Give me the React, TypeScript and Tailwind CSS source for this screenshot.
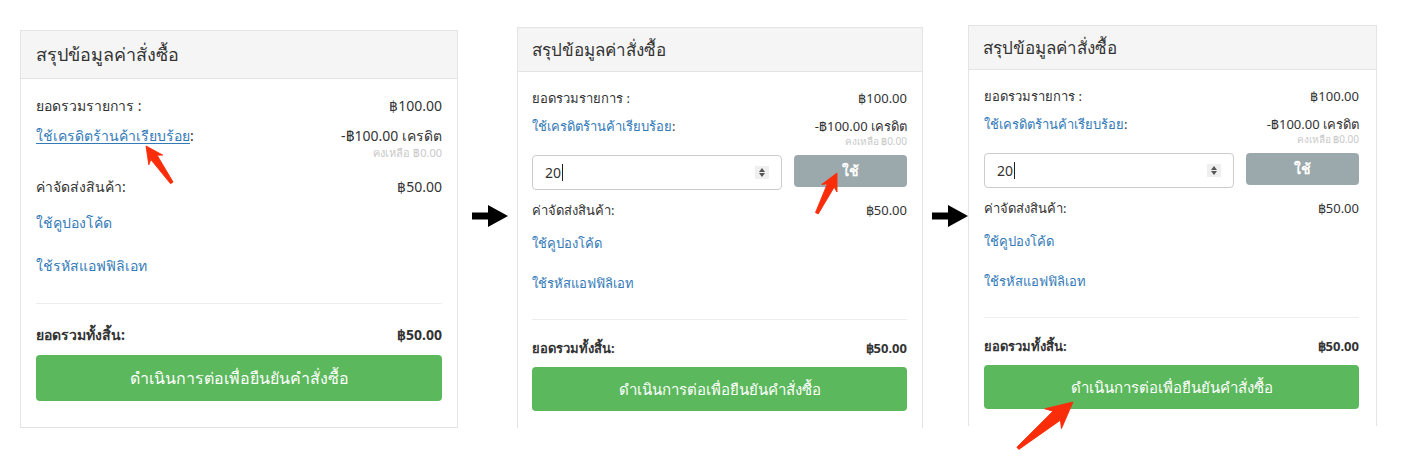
const blue = "text-[#337ab7]";

function BlackArrow() {
  return (
    <svg width="36" height="22" viewBox="0 0 36 22">
      <rect x="0" y="7.5" width="18" height="7" fill="#000" />
      <polygon points="16,0 36,11 16,22" fill="#000" />
    </svg>
  );
}

function RedArrow({ x, y, angle, len, head }: { x: number; y: number; angle: number; len: number; head: number }) {
  const w = head * 0.5;
  const pts = [
    [0, 0],
    [-w, head],
    [-w * 0.45, head * 0.82],
    [-1.5, len],
    [1.5, len],
    [w * 0.45, head * 0.82],
    [w, head],
  ]
    .map((p) => p.join(","))
    .join(" ");
  return (
    <g transform={`translate(${x} ${y}) rotate(${angle})`}>
      <polygon points={pts} fill="#fa2d0a" strokeLinejoin="round" stroke="#fa2d0a" strokeWidth="0.8" />
    </g>
  );
}

function FirstPanel() {
  return (
    <div className="mt-[30px] w-[438px] shrink-0 border border-[#e4e4e4] bg-white">
      <div className="flex h-[48px] items-center border-b border-[#e4e4e4] bg-[#f5f5f5] px-[15px] text-[18px] text-[#333]">
        สรุปข้อมูลค่าสั่งซื้อ
      </div>
      <div className="px-[15px] pt-[17px] pb-[26px] text-[14px] leading-[20px] text-[#333]">
        <div className="flex justify-between">
          <span>ยอดรวมรายการ :</span>
          <span>฿100.00</span>
        </div>
        <div className="mt-[10px] flex justify-between">
          <span>
            <span className={`${blue} underline underline-offset-2`}>ใช้เครดิตร้านค้าเรียบร้อย</span>:
          </span>
          <span>-฿100.00 เครดิต</span>
        </div>
        <div className="text-right text-[11px] leading-[14px] text-[#c9c9c9]">คงเหลือ ฿0.00</div>
        <div className="mt-[17px] flex justify-between">
          <span>ค่าจัดส่งสินค้า:</span>
          <span>฿50.00</span>
        </div>
        <div className={`mt-[16px] ${blue}`}>ใช้คูปองโค้ด</div>
        <div className={`mt-[23px] ${blue}`}>ใช้รหัสแอฟฟิลิเอท</div>
        <div className="mt-[27px] border-t border-[#eee]" />
        <div className="mt-[21px] flex justify-between font-bold">
          <span>ยอดรวมทั้งสิ้น:</span>
          <span>฿50.00</span>
        </div>
        <div className="mt-[10px] flex h-[46px] items-center justify-center rounded-[4px] bg-[#5cb85c] text-[16px] text-white">
          ดำเนินการต่อเพื่อยืนยันคำสั่งซื้อ
        </div>
      </div>
    </div>
  );
}

function CreditPanel({ box, body }: { box: string; body: string }) {
  return (
    <div className={`${box} shrink-0 border-x border-t border-[#e4e4e4] bg-white`}>
      <div className="flex h-[44px] items-center border-b border-[#e4e4e4] bg-[#f5f5f5] px-[14px] text-[17px] text-[#333]">
        สรุปข้อมูลค่าสั่งซื้อ
      </div>
      <div className={`${body} pt-[17px] pb-[17px] text-[13px] leading-[18px] text-[#333]`}>
        <div className="flex justify-between">
          <span>ยอดรวมรายการ :</span>
          <span>฿100.00</span>
        </div>
        <div className="mt-[10px] flex justify-between">
          <span>
            <span className={blue}>ใช้เครดิตร้านค้าเรียบร้อย</span>:
          </span>
          <span>-฿100.00 เครดิต</span>
        </div>
        <div className="text-right text-[10px] leading-[13px] text-[#c9c9c9]">คงเหลือ ฿0.00</div>
        <div className="mt-[7px] flex items-start gap-[12px]">
          <div className="flex h-[35px] flex-1 items-center justify-between rounded-[4px] border border-[#ccc] pl-[12px] pr-[12px] text-[14px]">
            <span className="flex items-center">
              20<span className="ml-[1px] h-[17px] w-px bg-[#222]" />
            </span>
            <span className="flex h-[13px] w-[14px] flex-col items-center justify-center gap-[1px] bg-[#efefef]">
              <svg width="6" height="4" viewBox="0 0 6 4"><polygon points="3,0 6,4 0,4" fill="#555" /></svg>
              <svg width="6" height="4" viewBox="0 0 6 4"><polygon points="0,0 6,0 3,4" fill="#555" /></svg>
            </span>
          </div>
          <div className="flex h-[32px] w-[113px] items-center justify-center rounded-[4px] bg-[#9ca9ac] text-[14px] font-bold text-white">
            ใช้
          </div>
        </div>
        <div className="mt-[11px] flex justify-between">
          <span>ค่าจัดส่งสินค้า:</span>
          <span>฿50.00</span>
        </div>
        <div className={`mt-[15px] ${blue}`}>ใช้คูปองโค้ด</div>
        <div className={`mt-[22px] ${blue}`}>ใช้รหัสแอฟฟิลิเอท</div>
        <div className="mt-[27px] border-t border-[#eee]" />
        <div className="mt-[19px] flex justify-between font-bold">
          <span>ยอดรวมทั้งสิ้น:</span>
          <span>฿50.00</span>
        </div>
        <div className="mt-[10px] flex h-[44px] items-center justify-center rounded-[4px] bg-[#5cb85c] text-[15px] text-white">
          ดำเนินการต่อเพื่อยืนยันคำสั่งซื้อ
        </div>
      </div>
    </div>
  );
}

export default function App() {
  return (
    <div className="relative h-[474px] w-[1401px] overflow-hidden bg-white font-['Noto_Sans','Liberation_Sans',sans-serif]">
      <div className="flex items-start pl-[20px]">
        <FirstPanel />
        <div className="w-[59px] shrink-0 pl-[14px] pt-[205px]">
          <BlackArrow />
        </div>
        <CreditPanel box="mt-[27px] w-[406px]" body="pl-[14px] pr-[15px]" />
        <div className="w-[45px] shrink-0 pl-[9px] pt-[205px]">
          <BlackArrow />
        </div>
        <CreditPanel box="mt-[25px] w-[409px]" body="pl-[15px] pr-[17px]" />
      </div>

      <svg className="pointer-events-none absolute left-0 top-0" width="1401" height="474">
        <RedArrow x={146} y={146} angle={-35} len={45} head={17} />
        <RedArrow x={837} y={173} angle={26.6} len={45} head={17} />
        <RedArrow x={1073} y={402} angle={50} len={72} head={26} />
      </svg>
    </div>
  );
}
